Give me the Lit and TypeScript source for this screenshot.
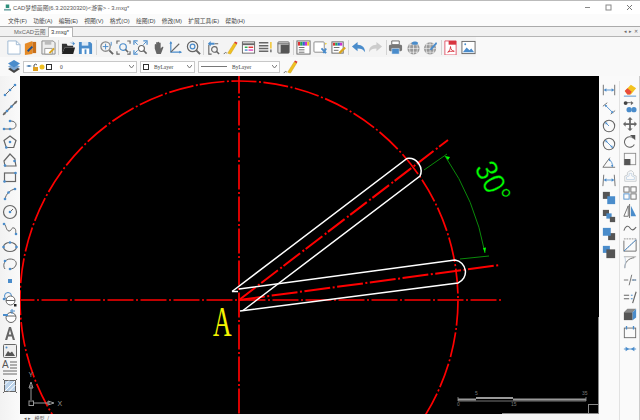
import { css, html, svg, LitElement } from "lit";
import { customElement } from "lit/decorators.js";

const B = "#4a8ccb";
const G = "#666";
const L = "#8a8a8a";

// small helper for the blue grip dots on the draw tools
const dot = (x: number, y: number, r = 1.3) => svg`<circle cx=${x} cy=${y} r=${r} fill=${B} stroke="none" />`;

const icons: Record<string, unknown> = {
  // file toolbar
  newDoc: svg`<path d="M2 1h9l4 4v10H2z" fill="#fff" stroke="#9db7d2" /><path d="M11 1v4h4" fill="none" stroke="#9db7d2" />`,
  openCad: svg`<path d="M2 4l8-3v14l-8 1z" fill="#e58a26" /><path d="M10 2h4v12h-4z" fill="#c9701a" /><path d="M5 12l5-5" stroke="#1d4f8f" stroke-width="2" />`,
  saveGray: svg`<path d="M1 1h12l2 2v12H1z" fill="#eee" stroke="#888" /><path d="M4 1h7v4H4z" fill="#bbb" /><path d="M4 9h8v6H4z" fill="#fff" stroke="#999" /><path d="M9 14l5-5" stroke="#d9a520" stroke-width="2" />`,
  folder: svg`<path d="M1 4h5l1 2h6v2H4l-3 7z" fill="#333" /><path d="M4 8h11l-2 7H1z" fill="#222" /><path d="M9 3h4l-1-2 3 3-3 2 1-2z" fill=${B} />`,
  saveAs: svg`<path d="M1 2h12l2 2v11H1z" fill=${B} /><path d="M4 2h7v4H4z" fill="#dfeaf5" /><path d="M4 9h8v6H4z" fill="#fff" /><path d="M7 10h2v5H7z" fill=${B} />`,
  // view tools
  zoomRt: svg`<circle cx="7" cy="7" r="5" fill="none" stroke=${L} stroke-width="1.4" /><path d="M11 11l4 4" stroke=${G} stroke-width="2" /><path d="M7 4v6M4 7h6" stroke=${B} /><path d="M13 2v4" stroke=${B} />`,
  zoomWin: svg`<path d="M1 4V1h3M12 1h3v3M15 12v3h-3M4 15H1v-3" fill="none" stroke=${G} stroke-width="1.2" /><circle cx="7.5" cy="7.5" r="3.5" fill="none" stroke=${B} stroke-width="1.3" /><path d="M10 10l3 3" stroke=${G} stroke-width="1.6" />`,
  zoomExt: svg`<path d="M1 5V1h4M11 1h4v4M1 11v4h4" fill="none" stroke=${B} stroke-width="1.3" /><path d="M2 2l3 3M14 2l-3 3M2 14l3-3" stroke=${B} /><circle cx="9" cy="9" r="3.2" fill="#fff" stroke=${G} stroke-width="1.2" /><path d="M11.5 11.5l3 3" stroke=${G} stroke-width="1.7" />`,
  pan: svg`<path d="M4 9V5c0-1 1.5-1 1.5 0V3c0-1 1.6-1 1.6 0v-.5c0-1 1.6-1 1.6 0V3.500c0-1 1.600-1 1.600 0V9l1.500-1.500c.8-.8 1.800 0 1.200 1L10.500 15H6z" fill="#666" />`,
  axes: svg`<path d="M3 2v11h11" fill="none" stroke=${B} stroke-width="1.300" /><path d="M3 13l9-9" stroke=${G} stroke-width="1.200" /><path d="M1.500 4L3 1l1.500 3zM12 11.500l3 1.500-3 1.500z" fill=${B} />`,
  zoomCircle: svg`<circle cx="7" cy="7" r="5.500" fill="none" stroke=${G} stroke-width="1.300" /><circle cx="7" cy="7" r="2.500" fill="none" stroke=${B} stroke-width="1.300" /><path d="M11 11l4 4" stroke=${G} stroke-width="2" />`,
  zoomPrev: svg`<path d="M3 5V15h3M13 4h-4" fill="none" stroke=${G} stroke-width="1.200" /><path d="M2 4l3-3v2h4v2H5v2z" fill=${B} /><circle cx="9" cy="10" r="3" fill="none" stroke=${G} stroke-width="1.200" /><path d="M11 12l3 3" stroke=${G} stroke-width="1.600" />`,
  pencil: svg`<path d="M5 14L12 3l2.500 1.500L8 15z" fill="#f0c020" stroke="#c99a10" stroke-width=".5" /><path d="M12 3l.8-1.500L15.500 3l-1 1.500z" fill="#d9332b" /><path d="M1 15c1-2 2-2 3-1" fill="none" stroke=${G} />`,
  layerTable: svg`<rect x="1.500" y="2" width="13" height="12" fill="#fff" stroke=${G} /><path d="M1.500 4.500h13" stroke=${G} stroke-width="2" /><path d="M4 7h3v1.500H4z" fill="#2aa84a" /><path d="M8 7h5v1.500H8z" fill="#d33" /><path d="M4 10h3v1.500H4z" fill=${B} /><path d="M8 10h5v1.500H8z" fill="#d4b" />`,
  listLines: svg`<path d="M1 3h10M1 6h10M1 9h10M1 12h10" stroke=${G} stroke-width="1.600" /><path d="M13 2h1.500v7H13z" fill="#f0c020" /><path d="M13 10h1.500v3H13z" fill=${G} />`,
  boxTool: svg`<rect x="2" y="2" width="12" height="12" rx="1" fill="#ddd" stroke=${G} /><rect x="5" y="5" width="9" height="9" fill="#555" /><path d="M2 4h12" stroke=${G} />`,
  palette: svg`<rect x="1" y="1" width="14" height="14" fill="#fff" stroke=${G} /><path d="M2 2h2.500v4H2z" fill="#d33" /><path d="M4.500 2H7v4H4.500z" fill="#2a5" /><path d="M7 2h2.500v4H7z" fill="#36c" /><path d="M9.500 2H12v4H9.500z" fill="#c3c" /><path d="M12 2h2v4h-2z" fill="#ec2" /><path d="M3 8h6M3 10.500h6M3 13h6" stroke=${G} />`,
  boxArrow: svg`<rect x="1" y="2" width="11" height="11" rx="1" fill="#fff" stroke=${L} /><path d="M9 9l5 5M14 9l-3 5" stroke=${B} stroke-width="2" /><path d="M13 3l2 1-2 1z" fill="#ec2" />`,
  paletteBrush: svg`<rect x="1" y="2" width="12" height="12" fill="#fff" stroke=${G} /><path d="M2 3h2.500v3H2z" fill="#d33" /><path d="M4.500 3H7v3H4.500z" fill="#2a5" /><path d="M7 3h2.500v3H7z" fill="#36c" /><path d="M9.500 3H12v3H9.500z" fill="#c3c" /><path d="M3 8h6M3 11h5" stroke=${G} /><path d="M9 14l6-6" stroke="#d9a520" stroke-width="2.500" />`,
  undo: svg`<path d="M1 7l6-5v3c5 0 8 3 8 8-2-3-4-4-8-4v3z" fill=${B} />`,
  redo: svg`<path d="M15 7l-6-5v3C4 5 1 8 1 13c2-3 4-4 8-4v3z" fill="#ccc" />`,
  printer: svg`<path d="M4 1h8v4H4z" fill="#fff" stroke=${G} /><rect x="1" y="5" width="14" height="7" rx="1.500" fill="#777" /><path d="M4 9h8v6H4z" fill=${B} stroke="#fff" stroke-width=".5" />`,
  globe: svg`<circle cx="8" cy="9" r="6.500" fill="#999" /><path d="M1.500 9h13M8 2.500v13M3 5h10M3 13h10M5 3.500c-1.500 3-1.500 8 0 11M11 3.500c1.500 3 1.500 8 0 11" fill="none" stroke="#fff" stroke-width=".6" /><path d="M6 3c2-2 5-2 7 0l-1 2H7z" fill=${B} />`,
  globe2: svg`<circle cx="7.500" cy="9" r="6.500" fill="#999" /><path d="M1 9h13M7.500 2.500v13M2.500 5h10M2.500 13h10M4.500 3.500c-1.500 3-1.500 8 0 11M10.500 3.500c1.500 3 1.500 8 0 11" fill="none" stroke="#fff" stroke-width=".6" /><path d="M7 10l7-8 1 2-6 7z" fill=${B} />`,
  pdf: svg`<path d="M2 1h12v15H2z" fill="#fff" stroke="#e0566a" /><path d="M6 1h8v4H6z" fill="#d8343f" /><path d="M5 13c2-1 3-4 3-6 0 3 2 5 4 5-3 0-5 0-7 1z" fill="none" stroke="#d8343f" />`,
  picture: svg`<rect x="1" y="1.500" width="14" height="13" fill="#fff" stroke=${G} /><path d="M2 13l4-5 3 3 2-2 3 4z" fill=${B} /><circle cx="4.500" cy="4.500" r="1" fill=${B} />`,
  // left draw tools
  line: svg`<path d="M3 13L13 3" stroke=${G} />${dot(3, 13)}${dot(8, 8)}${dot(13, 3)}`,
  xline: svg`<path d="M1 15L15 1" stroke=${G} stroke-width="1.200" /><path d="M1 15l1-3 2 2zM15 1l-1 3-2-2z" fill=${G} />${dot(5, 11)}${dot(9.500, 6.500)}`,
  polyArc: svg`<path d="M2 12h7c4 0 5-2 5-4s-2-4-5-4" fill="none" stroke=${G} />${dot(2, 12)}${dot(8, 12)}${dot(8, 4)}`,
  pentaDot: svg`<path d="M8 2l6 4.500-2.300 7H4.300L2 6.500z" fill="none" stroke=${G} stroke-width="1.200" />${dot(8, 8)}${dot(4.300, 13.500)}`,
  polygon: svg`<path d="M8 2l5 5v2l1 5H3l-1-5z" fill="none" stroke=${G} stroke-width="1.200" />${dot(12.500, 9)}${dot(3, 13.500)}`,
  rect: svg`<rect x="2.500" y="4" width="11" height="8.500" fill="none" stroke=${G} stroke-width="1.200" />${dot(2.500, 12.500)}${dot(13.500, 4)}`,
  arc: svg`<path d="M3 13c1-5 5-9 10-10" fill="none" stroke=${G} />${dot(3, 13)}${dot(6.500, 6.500)}${dot(13, 3)}`,
  circle: svg`<circle cx="8" cy="8" r="6.500" fill="none" stroke=${G} stroke-width="1.200" /><path d="M8 8l3-3" stroke=${G} />${dot(8, 8)}`,
  spline: svg`<path d="M2 3c2 0 2 7 5 7s2-4 5-3 1 6 2 6" fill="none" stroke=${G} />${dot(2, 3)}${dot(14, 13)}`,
  ellipse: svg`<ellipse cx="8" cy="8" rx="6.500" ry="4.500" fill="none" stroke=${G} stroke-width="1.200" />${dot(8, 3.500)}${dot(1.500, 8)}${dot(14.500, 8)}`,
  ellArc: svg`<path d="M3 13C0 9 3 3 8 3s7 3 6 6-4 4-6 4" fill="none" stroke=${G} />${dot(3, 5)}${dot(8, 13)}`,
  point: svg`<rect x="6" y="6" width="4" height="4" fill=${B} />`,
  block: svg`<circle cx="6" cy="5" r="3.500" fill="none" stroke=${B} /><circle cx="8.500" cy="9.500" r="4.500" fill="#fff" stroke=${G} /><path d="M4 9.500h9" stroke=${G} />${dot(2, 8)}<rect x="12" y="13" width="2.500" height="2.500" fill="#222" />`,
  block2: svg`<circle cx="9" cy="9.500" r="5" fill="#fff" stroke=${G} /><path d="M4 8h10" stroke=${G} /><path d="M1 6h5v2H1z" fill=${B} /><path d="M10 1v5M8 3h5" stroke=${B} />`,
  textA: svg`<path d="M3 15L7 2h2l4 13h-2.200l-1-3.500H6.200l-1 3.500zM6.800 9.500h2.400L8 5z" fill="#666" />`,
  image: svg`<rect x="1.500" y="1.500" width="13" height="13" rx="1" fill="#eee" stroke=${G} /><path d="M3 13l3-5 2 2 2-1.500 3 4.500z" fill="#555" /><circle cx="4.500" cy="4.500" r="1" fill=${B} />`,
  mtext: svg`<text x="0" y="8" font-size="10" font-family="Liberation Sans" fill="#555">A</text><path d="M8 2h7M8 5h7M8 8h7M1 11h14M1 14h14" stroke=${G} />`,
  hatch: svg`<rect x="2.500" y="2.500" width="11" height="11" fill="#bcd3ea" stroke=${G} /><path d="M2.500 7l4.500-4.500M2.500 13.500l11-11M7 13.500l6.500-6.500" stroke="#fff" /><path d="M1 1l2 2M13 13l2 2M15 1l-2 2M1 15l2-2" stroke=${G} />`,
  // right edit tools
  dimLinear: svg`<path d="M1.500 2v12M14.500 2v12" stroke=${G} /><path d="M3 8h10" stroke=${B} /><path d="M2 8l3-2v4zM14 8l-3-2v4z" fill=${B} />`,
  dimAligned: svg`<path d="M1 6l5-4M10 15l5-4" stroke=${G} /><path d="M4 5l8 8" stroke=${B} /><path d="M3 4l3 1-2 2zM13 14l-3-1 2-2z" fill=${B} />`,
  dimRadius: svg`<circle cx="8" cy="8" r="6.500" fill="none" stroke=${G} stroke-width="1.200" /><path d="M8 8L4 4" stroke=${B} /><path d="M3.500 3.500l3 1-2 2z" fill=${B} />`,
  dimDia: svg`<circle cx="8" cy="8" r="6.500" fill="none" stroke=${G} stroke-width="1.200" /><path d="M4 4l8 8" stroke=${B} /><path d="M3.500 3.500l3 1-2 2zM12.500 12.500l-3-1 2-2z" fill=${B} />`,
  dimAngle: svg`<path d="M1 14L9 3M1 14h14" stroke=${G} /><path d="M8 5c3 2 4 5 4 8" fill="none" stroke=${B} /><path d="M8 4l2 2-2 1zM12 14l-2-2 3-1z" fill=${B} />`,
  dimCont: svg`<path d="M2 2l-1 13M14 2l1 13" stroke=${G} /><path d="M3 8h10" stroke=${B} /><path d="M2 8l3-2v4zM14 8l-3-2v4z" fill=${B} />`,
  order1: svg`<rect x="1" y="1" width="8" height="8" fill="#555" /><rect x="6" y="6" width="9" height="9" fill=${B} />`,
  order2: svg`<rect x="1" y="1" width="7" height="7" fill="#555" /><rect x="5" y="5" width="6" height="6" fill=${B} /><rect x="9" y="9" width="6" height="6" fill="#555" />`,
  order3: svg`<rect x="7" y="7" width="8" height="8" fill="#555" /><rect x="1" y="1" width="9" height="9" fill=${B} />`,
  order4: svg`<rect x="1" y="1" width="8" height="8" fill=${B} /><rect x="5" y="5" width="10" height="10" fill="#555" />`,
  eraser: svg`<path d="M2 9l7-7 6 4-6 7H5z" fill="#f3c21f" /><path d="M2 9l3-3 5 4-2 3H5z" fill="#e94b3c" /><path d="M1 15h14" stroke=${B} />`,
  copy: svg`<path d="M3 3h6" stroke=${G} /><circle cx="3" cy="3.500" r="2.200" fill="#444" /><path d="M9 1l3 2.500L9 6z" fill=${G} /><circle cx="7" cy="11" r="3" fill=${B} /><circle cx="12.500" cy="11" r="3" fill=${B} />`,
  move: svg`<path d="M8 0l3 3H9v4h4V5l3 3-3 3V9H9v4h2l-3 3-3-3h2V9H3v2L0 8l3-3v2h4V3H5z" fill="#666" />`,
  rotate: svg`<path d="M12 5a6 6 0 1 0 1 7" fill="none" stroke=${G} stroke-width="1.200" /><path d="M8 1h6v6z" fill="#555" />`,
  scale: svg`<rect x="1.500" y="1.500" width="13" height="13" fill="none" stroke=${L} /><rect x="1.500" y="8" width="7" height="7" fill="#555" />`,
  offset: svg`<path d="M2 14V8l3-1V4l3-2h2l2 2v3l3 1v6z" fill="none" stroke="#c5c9cd" /><path d="M4 12V9l3-1V5h3v3l3 1v3z" fill="none" stroke="#c5d5e5" />`,
  array: svg`<rect x="1" y="1" width="6" height="6" fill="none" stroke=${G} /><rect x="9" y="1" width="6" height="6" fill="none" stroke=${G} /><rect x="1" y="9" width="6" height="6" fill="none" stroke=${B} /><rect x="9" y="9" width="6" height="6" fill="none" stroke=${G} />`,
  mirror: svg`<path d="M6 2L1 14h5z" fill="#fff" stroke=${G} /><path d="M9 2l6 12H9z" fill=${B} /><path d="M7.500 0v16" stroke=${G} />`,
  stretch: svg`<path d="M1 11c2-6 5-6 7-3s4 3 7-1" fill="none" stroke=${G} stroke-width="1.200" />`,
  trimBox: svg`<path d="M1 1h14v1M1 15L15 2" fill="none" stroke=${L} stroke-dasharray="2 1" /><path d="M1 3v12h14V2" fill="none" stroke=${G} /><path d="M1 15L15 2" stroke=${B} />`,
  fillet: svg`<path d="M1 2h14" stroke="#aaa" /><path d="M2 15c0-7 4-11 11-12" fill="none" stroke=${G} /><path d="M2 2c1 3 1 6 0 13" fill="none" stroke="#bcd" />`,
  breakLn: svg`<path d="M1 8h5M10 8h5" stroke=${G} /><path d="M7 14l3-12" stroke=${G} /><path d="M11 8h4" stroke=${B} stroke-dasharray="2 1" />`,
  join: svg`<path d="M1 6h6M1 10h6" stroke=${G} stroke-width="1.300" /><path d="M9 6h2M9 10h2" stroke=${B} stroke-width="1.300" /><path d="M11 15l4-13" stroke=${G} stroke-width="1.300" />`,
  cube: svg`<path d="M1 6l4-4h10l-4 4z" fill="#888" /><path d="M1 6h10v9H1z" fill="#555" /><path d="M11 6l4-4v10l-4 3z" fill=${B} />`,
  gripBox: svg`<rect x="1.500" y="3.500" width="13" height="11" fill="none" stroke=${G} /><path d="M4 1v4M12 1v4" stroke=${B} stroke-width="1.500" />`,
  joinIn: svg`<path d="M1 8h14" stroke=${B} /><path d="M7 8L3 5.500v5zM9 8l4-2.500v5z" fill=${B} />`,
};

const icon = (name: string) => html`<svg class="ic" viewBox="0 0 16 16" fill="none">${icons[name]}</svg>`;

const menus = ["文件(F)", "功能(A)", "编辑(E)", "视图(V)", "格式(O)", "绘图(D)", "修改(M)", "扩展工具(E)", "帮助(H)"];

// "|" marks a separator
const mainTools = "newDoc openCad saveGray | folder saveAs | zoomRt zoomWin zoomExt pan axes zoomCircle | zoomPrev pencil layerTable listLines boxTool | palette boxArrow paletteBrush | undo redo | printer globe globe2 | pdf picture".split(" ");
const leftTools = "line xline polyArc pentaDot polygon rect arc circle spline ellipse ellArc point block block2 textA image mtext hatch".split(" ");
const rightA = "dimLinear dimAligned dimRadius dimDia dimAngle dimCont order1 order2 order3 order4".split(" ");
const rightB = "eraser copy move rotate scale offset array mirror stretch trimBox fillet breakLn join cube gripBox joinIn".split(" ");

@customElement("app-root")
export class AppRoot extends LitElement {
  static styles = css`
    :host {
      display: block;
      width: 640px;
      height: 420px;
      overflow: hidden;
      background: #f5f5f5;
      color: #444;
      font-family: "Liberation Sans", "Noto Sans CJK SC", sans-serif;
      font-size: 5.8px;
    }
    .ic {
      display: block;
      width: 100%;
      height: 100%;
    }
    .title {
      height: 13px;
      border-top: 1px solid #bbb;
      background: #fff;
      display: flex;
      align-items: center;
      padding-left: 4px;
      gap: 2px;
      color: #555;
    }
    .title-logo {
      width: 7px;
      height: 8px;
    }
    .title-name {
      flex: 1;
    }
    .win {
      display: flex;
      align-items: center;
      gap: 14px;
      padding-right: 7px;
    }
    .win svg {
      width: 7px;
      height: 7px;
    }
    .menu {
      height: 12px;
      background: #fbfbfb;
      border-bottom: 1px solid #aaa;
      display: flex;
      align-items: center;
      gap: 6.2px;
      padding-left: 8px;
    }
    .tabs {
      height: 9px;
      background: #f1f1f1;
      border-bottom: 1px solid #b5b5b5;
      display: flex;
      align-items: flex-end;
      padding-left: 14px;
    }
    .tab {
      width: 34px;
      height: 8px;
      line-height: 8px;
      color: #666;
    }
    .tab.on {
      width: 25px;
      height: 10px;
      line-height: 9px;
      margin-bottom: -1px;
      box-sizing: border-box;
      padding-left: 2px;
      background: #fff;
      border: 1px solid #b5b5b5;
      border-bottom: 0;
      color: #333;
    }
    .tab-ctl {
      margin-left: auto;
      display: flex;
      gap: 2px;
      padding: 0 2px 1px 0;
      font-size: 4.5px;
      line-height: 7px;
      color: #666;
    }
    .tools {
      height: 20px;
      background: #f9f9f9;
      display: flex;
    }
    .tool-strip {
      width: 476px;
      background: #f4f4f4;
      display: flex;
      align-items: center;
      box-sizing: border-box;
      padding-left: 6px;
    }
    .t {
      width: 15px;
      height: 15px;
      margin-right: 2.45px;
      flex: none;
    }
    .sep {
      width: 1px;
      height: 15px;
      background: #d4d4d4;
      margin-right: 1.7px;
      flex: none;
    }
    .layers {
      height: 19px;
      background: #f9f9f9;
      display: flex;
      align-items: center;
      padding-left: 7px;
      font-family: "Liberation Serif", serif;
      font-size: 5.5px;
    }
    .stack {
      width: 14px;
      height: 15px;
      margin-right: 2px;
    }
    .combo {
      height: 12px;
      box-sizing: border-box;
      background: #fff;
      border: 1px solid #c8c8c8;
      margin-right: 3px;
      display: flex;
      align-items: center;
      padding: 0 2px;
      gap: 2px;
    }
    .combo svg {
      flex: none;
    }
    .combo .chev {
      margin-left: auto;
      width: 5px;
      height: 3px;
    }
    .c1 {
      width: 114px;
    }
    .c1 .val {
      margin-left: 6px;
    }
    .c2 {
      width: 55px;
    }
    .c2 .val,
    .c3 .val {
      margin-left: 3px;
    }
    .c3 {
      width: 82px;
    }
    .pen {
      width: 15px;
      height: 15px;
    }
    .body {
      height: 344px;
      display: flex;
    }
    .left {
      width: 20px;
      flex: none;
      background: linear-gradient(90deg, #f2f2f2, #fafafa);
      padding-top: 5.5px;
      box-sizing: border-box;
    }
    .lt {
      width: 16px;
      height: 16px;
      padding: 0.7px 2px;
    }
    .mid {
      width: 579px;
      flex: none;
      display: flex;
      flex-direction: column;
    }
    .canvas {
      display: block;
      width: 579px;
      height: 338px;
      background: #000;
    }
    .model {
      height: 6px;
      background: #f5f5f5;
      display: flex;
      gap: 3px;
      padding-left: 4px;
      line-height: 8px;
      font-size: 5px;
      color: #555;
      overflow: hidden;
    }
    .right {
      flex: 1;
      display: flex;
      background: #fafafa;
      border-right: 2px solid #ccc;
      padding-top: 5px;
      box-sizing: border-box;
    }
    .col {
      width: 20px;
      padding-left: 2px;
      box-sizing: border-box;
    }
    .col + .col {
      border-left: 1px solid #e2e2e2;
    }
    .rt {
      width: 14px;
      height: 14px;
      padding: 1.65px 1px;
    }
    .rt.big {
      padding: 2px 1px;
    }
  `;

  private renderCanvas() {
    return svg`
      <svg class="canvas" viewBox="20 76 579 338" fill="none">
        <g stroke="#f00" stroke-width="1.700">
          <circle cx="239" cy="300" r="219" stroke-dasharray="25 2.500 2 2.500" transform="rotate(-100.34 239 300)" />
          <path d="M21 300H503" stroke-dasharray="26 2.500 2 2.500" stroke-dashoffset="12.500" />
          <path d="M239 76V414" stroke-dasharray="25 2.500 2 2.500" stroke-dashoffset="7.500" />
          <path d="M239 300L448 140" stroke-dasharray="21 3 2 2" stroke-width="2" />
          <path d="M239 300L500 265" stroke-dasharray="26 2.500 2 2.500" stroke-width="2" />
        </g>
        <g stroke="#fff" stroke-width="1.500">
          <path d="M232 291.500L407 158.500A12.500 12.500 0 0 1 420 176L243 310.500" />
          <path d="M232 291.500h6" />
          <path d="M239 289L455 260A12 12 0 0 1 458 283L240 311" />
        </g>
        <g stroke="#0a8a0a">
          <path d="M424 170L447 154" />
          <path d="M460 259L489 256" />
          <path d="M445 156A251 251 0 0 1 485 253" />
        </g>
        <path d="M445 156l5 1-2 3zM485 253l-2-5 3-.5z" fill="#0f0" />
        <text transform="translate(474 168) rotate(63) scale(.9 1)" font-family="Liberation Sans, sans-serif" font-size="31" fill="#00ff00" stroke="#000" stroke-width=".35">30°</text>
        <text transform="translate(213 336) scale(.6 1)" font-family="Liberation Serif, serif" font-size="43" fill="#f4f400">A</text>
        <g stroke="#999">
          <path d="M31 400V385M34 403H50" />
          <rect x="29" y="401" width="4.500" height="4.500" />
          <path d="M29 388l2-6 2 6zM48 401l6 2-6 2z" />
        </g>
        <g font-family="Liberation Sans, sans-serif" fill="#999">
          <text x="28.500" y="377" font-size="7">Y</text>
          <text x="57.500" y="406" font-size="7">X</text>
        </g>
        <g>
          <path d="M458 397V401H586V397" stroke="#777" />
          <path d="M458 399.500H476M513 399.500H586" stroke="#999" stroke-width="2" />
          <path d="M476 398H513" stroke="#999" stroke-width="2" />
          <g font-family="Liberation Sans, sans-serif" font-size="5" fill="#777">
            <text x="457" y="406">0</text>
            <text x="475" y="395">5</text>
            <text x="511" y="406">15</text>
            <text x="582" y="395">35</text>
          </g>
        </g>
        <path d="M598.500 317V414M502 413.500H598" stroke="#888" />
        <rect x="588.500" y="404.500" width="10" height="10" stroke="#888" />
      </svg>
    `;
  }

  render() {
    return html`
      <div class="title">
        <svg class="title-logo" viewBox="0 0 8 8"><path d="M2 0h4v4H2z" fill="#2d8f7b" /><path d="M0 5h8v2H0z" fill="#7aa" /></svg>
        <span class="title-name">CAD梦想画图(6.3.20230320)&lt;游客&gt; - 3.mxg*</span>
        <div class="win">
          <svg viewBox="0 0 7 7"><path d="M1 3.500h5" stroke="#888" /></svg>
          <svg viewBox="0 0 7 7"><rect x="1" y="1" width="5" height="5" fill="none" stroke="#888" /></svg>
          <svg viewBox="0 0 7 7"><path d="M1 1l5 5M6 1L1 6" stroke="#777" /></svg>
        </div>
      </div>
      <div class="menu">${menus.map((m) => html`<span>${m}</span>`)}</div>
      <div class="tabs">
        <span class="tab">MxCAD云图</span>
        <span class="tab on">3.mxg*</span>
        <span class="tab-ctl"><span>◂</span><span>▸</span><span>✕</span></span>
      </div>
      <div class="tools">
        <div class="tool-strip">
          ${mainTools.map((t) => (t === "|" ? html`<i class="sep"></i>` : html`<div class="t">${icon(t)}</div>`))}
        </div>
      </div>
      <div class="layers">
        <svg class="stack" viewBox="0 0 14 15">
          <path d="M7 7l6 3-6 4-6-4z" fill="#444" />
          <path d="M7 4.500l6 3-6 4-6-4z" fill="#7aa7d4" />
          <path d="M7 1l6 3.500-6 4-6-4z" fill="#4a8ccb" />
        </svg>
        <div class="combo c1">
          <svg width="26" height="8" viewBox="0 0 26 8">
            <path d="M0 3l3-1 3 1-3 1z" fill="#47a" />
            <path d="M7 4h5v4H7z" fill="#e0a020" /><path d="M8 4V2a2 2 0 0 1 3 0" fill="none" stroke="#555" />
            <circle cx="16" cy="4" r="2.500" fill="#f0c020" />
            <rect x="20.500" y="1.500" width="5" height="5" fill="#fff" stroke="#333" />
          </svg>
          <span class="val">0</span>
          <svg class="chev" viewBox="0 0 5 3"><path d="M0 0l2.500 3L5 0" fill="none" stroke="#777" /></svg>
        </div>
        <div class="combo c2">
          <svg width="6" height="6" viewBox="0 0 6 6"><rect x=".5" y=".5" width="5" height="5" fill="#fff" stroke="#333" /></svg>
          <span class="val">ByLayer</span>
          <svg class="chev" viewBox="0 0 5 3"><path d="M0 0l2.500 3L5 0" fill="none" stroke="#777" /></svg>
        </div>
        <div class="combo c3">
          <svg width="26" height="3" viewBox="0 0 26 3"><path d="M0 1.500h26" stroke="#777" /></svg>
          <span class="val">ByLayer</span>
          <svg class="chev" viewBox="0 0 5 3"><path d="M0 0l2.500 3L5 0" fill="none" stroke="#777" /></svg>
        </div>
        <div class="pen">${icon("pencil")}</div>
      </div>
      <div class="body">
        <div class="left">
          ${leftTools.map((t) => html`<div class="lt">${icon(t)}</div>`)}
        </div>
        <div class="mid">
          ${this.renderCanvas()}
          <div class="model"><span>◂ ▸</span><span>模型</span><span>/</span></div>
        </div>
        <div class="right">
          <div class="col">${rightA.map((t) => html`<div class="rt big">${icon(t)}</div>`)}</div>
          <div class="col">${rightB.map((t) => html`<div class="rt">${icon(t)}</div>`)}</div>
        </div>
      </div>
    `;
  }
}
